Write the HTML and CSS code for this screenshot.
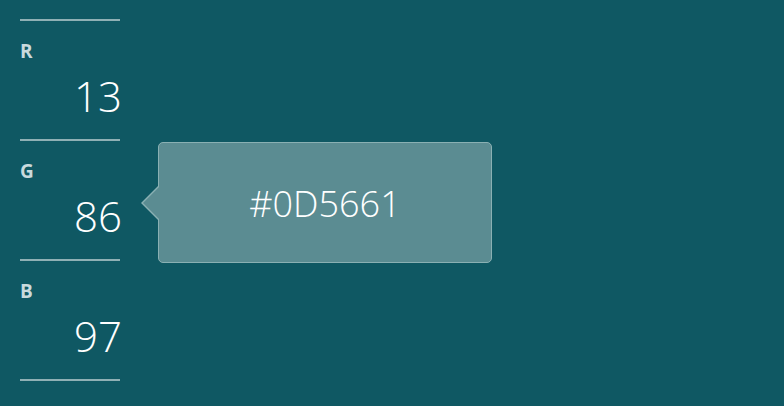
FILE: index.html
```html
<!DOCTYPE html>
<html>
<head>
<meta charset="utf-8">
<link rel="stylesheet" href="styles.css">
</head>
<body>
<div class="page">
  <div class="channels">
    <div class="channel">
      <div class="label">R</div>
      <div class="value">13</div>
    </div>
    <div class="channel">
      <div class="label">G</div>
      <div class="value">86</div>
    </div>
    <div class="channel last">
      <div class="label">B</div>
      <div class="value">97</div>
    </div>
  </div>
  <div class="tooltip">
    <span class="hex">#0D5661</span>
  </div>
</div>
</body>
</html>
```
FILE: styles.css
```css
html, body {
  margin: 0;
  padding: 0;
}
body {
  background: #0f5863;
  width: 784px;
  height: 406px;
  overflow: hidden;
  font-family: "Open Sans", "Noto Sans", sans-serif;
  color: #ffffff;
}
.page {
  position: relative;
  width: 784px;
  height: 406px;
  padding: 19px 0 0 20px;
  box-sizing: border-box;
}
.channels {
  width: 100px;
  display: flex;
  flex-direction: column;
}
.channel {
  border-top: 2px solid #8fb0b5;
  height: 118px;
  box-sizing: content-box;
  display: flex;
  flex-direction: column;
}
.channel.last {
  border-bottom: 2px solid #8fb0b5;
}
.label {
  margin-top: 17px;
  font-size: 19px;
  font-weight: 700;
  line-height: 26px;
  color: #c9dadd;
}
.value {
  margin-top: 7px;
  margin-right: -2px;
  text-align: right;
  font-size: 42px;
  font-weight: 300;
  line-height: 50px;
  color: #ffffff;
}
.tooltip {
  position: absolute;
  left: 158px;
  top: 142px;
  width: 334px;
  height: 121px;
  box-sizing: border-box;
  background: #5b8c92;
  border: 1px solid #8ab0b3;
  border-radius: 5px;
  display: flex;
  align-items: center;
  justify-content: center;
}
.tooltip::before {
  content: "";
  position: absolute;
  left: -18px;
  top: 43px;
  width: 0;
  height: 0;
  border-top: 17px solid transparent;
  border-bottom: 17px solid transparent;
  border-right: 17px solid #8ab0b3;
}
.tooltip::after {
  content: "";
  position: absolute;
  left: -16px;
  top: 44px;
  width: 0;
  height: 0;
  border-top: 16px solid transparent;
  border-bottom: 16px solid transparent;
  border-right: 16px solid #5b8c92;
}
.hex {
  font-size: 36px;
  font-weight: 300;
  color: #ffffff;
  line-height: 1;
  padding-top: 2px;
}
```
